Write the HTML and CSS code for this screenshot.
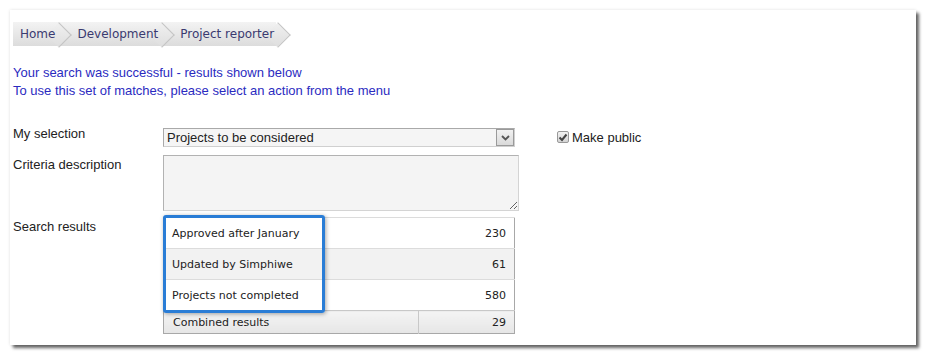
FILE: index.html
```html
<!DOCTYPE html>
<html lang="en">
  <head>
    <meta charset="UTF-8" />
    <title>Project reporter</title>
    <link rel="stylesheet" href="styles.css">
  </head>
  <body>
    <div class="panel">
      <ul class="crumbs">
        <li class="crumb"><span>Home</span></li>
        <li class="crumb"><span>Development</span></li>
        <li class="crumb"><span>Project reporter</span></li>
      </ul>

      <div class="notice">
        <p>Your search was successful - results shown below</p>
        <p>To use this set of matches, please select an action from the menu</p>
      </div>

      <div class="form">
        <label class="label">My selection</label>
        <div class="select">
          <span class="select-text">Projects to be considered</span>
          <span class="select-btn">
            <svg width="9" height="6" viewBox="0 0 9 6"><path d="M1 1 L4.5 4.5 L8 1" fill="none" stroke="#555" stroke-width="1.8"/></svg>
          </span>
        </div>
        <div class="public">
          <span class="check">
            <svg width="10" height="9" viewBox="0 0 10 9"><path d="M1.5 4.5 L4 7 L8.5 1.5" fill="none" stroke="#444" stroke-width="2"/></svg>
          </span>
          Make public
        </div>

        <label class="label label-criteria">Criteria description</label>
        <textarea class="criteria"></textarea>

        <label class="label label-results">Search results</label>
        <div class="results">
          <table>
            <tr><td>Approved after January</td><td class="num">230</td></tr>
            <tr class="alt"><td>Updated by Simphiwe</td><td class="num">61</td></tr>
            <tr><td>Projects not completed</td><td class="num">580</td></tr>
            <tr class="total"><td>Combined results</td><td class="num">29</td></tr>
          </table>
          <div class="highlight"></div>
        </div>
      </div>
    </div>
  </body>
</html>
```

FILE: styles.css
```css
* {
  padding: 0;
  margin: 0;
  border: 0;
  box-sizing: border-box;
}
ul li {
  list-style: none;
}
body {
  background: #fff;
  padding: 10px;
  font-family: "Liberation Sans", Arial, sans-serif;
  font-size: 13px;
  color: #222;
}
/* -------------- */
.panel {
  width: 906px;
  height: 335px;
  background: #fff;
  padding: 12px 0 0 3px;
  box-shadow: 3px 3px 3px rgba(0, 0, 0, 0.6), 0 0 3px rgba(0, 0, 0, 0.12);
}

.crumbs {
  display: flex;
  height: 24px;
  font-family: "DejaVu Sans", Verdana, sans-serif;
  font-size: 12px;
  color: #3a3a70;
}

.crumb {
  position: relative;
  display: flex;
  align-items: center;
  padding: 0 2px 0 20px;
  background: linear-gradient(#f3f3f3, #dcdcdc);
}

.crumb:first-child {
  padding-left: 7px;
}

.crumb span {
  position: relative;
  z-index: 2;
}

.crumb::after {
  content: "";
  position: absolute;
  z-index: 1;
  top: 3.5px;
  left: calc(100% - 7.5px);
  width: 17px;
  height: 17px;
  transform: rotate(45deg);
  background: linear-gradient(135deg, #f0f0f0, #dedede);
  border-top: 1px solid #c4c4c4;
  border-right: 1px solid #c4c4c4;
}

.notice {
  margin-top: 18px;
  color: #2b2bbf;
  line-height: 18px;
}

.form {
  display: grid;
  grid-template-columns: 150px 356px auto;
  margin-top: 28px;
}

.label {
  grid-column: 1;
  line-height: 15px;
  margin-top: -2px;
}

.select {
  grid-column: 2;
  width: 352px;
  height: 19px;
  display: flex;
  align-items: center;
  justify-content: space-between;
  background: #f5f5f5;
  border: 1px solid #a9a9a9;
  border-right-color: #d0d0d0;
  border-bottom-color: #d0d0d0;
  padding-left: 3px;
}

.select-btn {
  width: 18px;
  height: 17px;
  display: flex;
  align-items: center;
  justify-content: center;
  background: linear-gradient(#f1f1f1, #dadada);
  border: 1px solid #9a9a9a;
}

.public {
  display: flex;
  align-items: center;
  gap: 3px;
  height: 18px;
  margin-left: 38px;
}

.check {
  width: 12px;
  height: 12px;
  display: flex;
  align-items: center;
  justify-content: center;
  background: linear-gradient(#f2f2f2, #d4d4d4);
  border: 1px solid #999;
  border-radius: 2px;
}

.label-criteria {
  margin-top: 10px;
}

.criteria {
  grid-column: 2;
  width: 356px;
  height: 56px;
  margin-top: 8px;
  background: #f4f4f4;
  border: 1px solid #b2b2b2;
  border-right-color: #d4d4d4;
  border-bottom-color: #d4d4d4;
  resize: both;
  font-family: inherit;
}

.label-results {
  margin-top: 8px;
}

.results {
  position: relative;
  grid-column: 2;
  margin-top: 6px;
  width: 352px;
}

.results table {
  width: 352px;
  border-collapse: collapse;
  border: 1px solid #a8a8a8;
  font-family: "DejaVu Sans", Verdana, sans-serif;
  font-size: 11px;
  color: #222;
}

.results td {
  height: 31px;
  padding: 0 8px;
  border-top: 1px solid #dcdcdc;
}

.results tr.alt td {
  background: #f2f2f2;
}

.results .num {
  text-align: right;
}

.results tr.total td {
  height: 23px;
  background: linear-gradient(#f4f4f4, #e6e6e6);
  border-top: 1px solid #c8c8c8;
  padding-left: 9px;
}

.results tr.total td:first-child {
  width: 255px;
  border-right: 1px solid #c8c8c8;
}

.highlight {
  position: absolute;
  left: 0;
  top: -2px;
  width: 162px;
  height: 98px;
  border: 3px solid #2a7dd6;
  border-radius: 3px;
  box-shadow: 1px 1px 4px rgba(0, 0, 0, 0.35);
}
```
